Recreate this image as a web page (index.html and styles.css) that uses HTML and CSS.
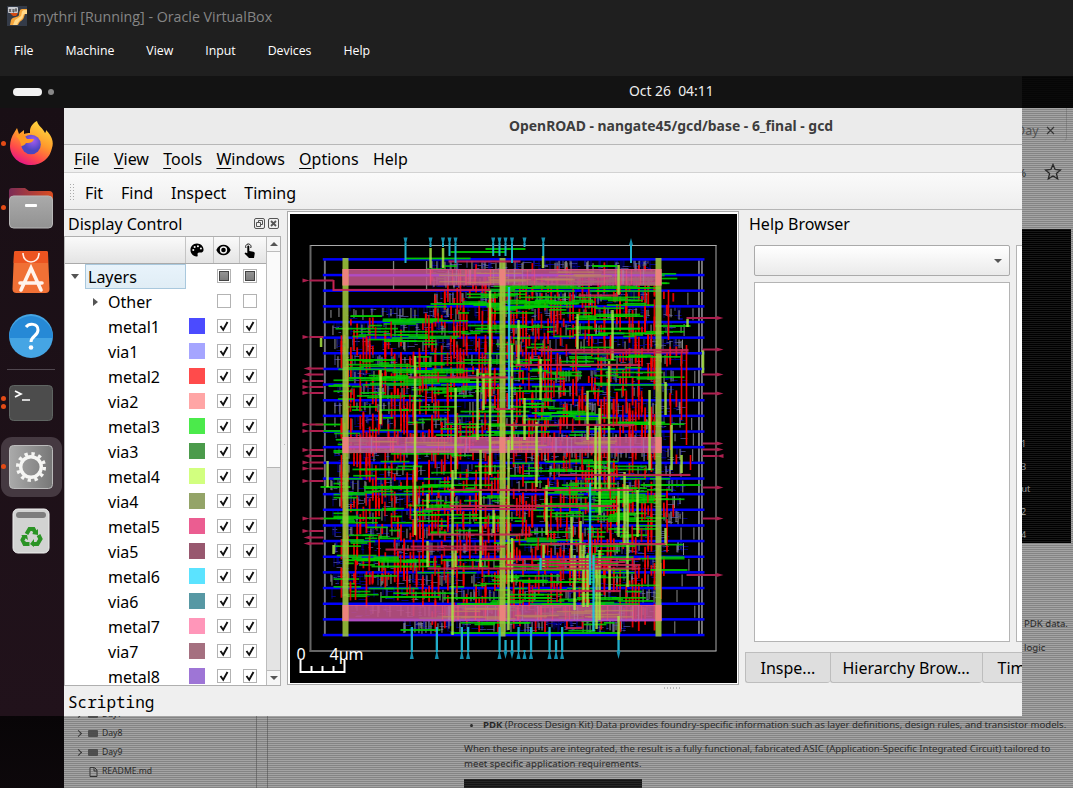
FILE: index.html
```html
<!DOCTYPE html>
<html lang="en">
<head>
<meta charset="utf-8">
<title>mythri [Running] - Oracle VirtualBox</title>
<link rel="stylesheet" href="styles.css">
</head>
<body>
<header class="host">
  <div class="host-title">
    <svg class="vm-icon" width="20" height="20" viewBox="0 0 20 20"><rect width="20" height="20" fill="#343b48"/><path d="M20 3h-5c-2 0-3 3-3 6-1 3-6 1-8 5l-1 5h8c2-5 5-4 6-8l1-3h2z" fill="#f6a63c"/><path d="M20 4h-3c-3 1-2 4-3 6l-6 4-2 5h4c2-6 6-5 6-9l1-2h3z" fill="#ffd98b"/><path d="M3 7h8l-2 3H6z" fill="#d64b13"/><rect x="1" y="1" width="10" height="6" rx="1" fill="#c9cbd0"/><path d="M2 3l2 3M4 3L2 6M6 3v3h1V3M9 2v4M8 4h2" stroke="#333" stroke-width=".8" fill="none"/></svg>
    <span>mythri [Running] - Oracle VirtualBox</span>
  </div>
  <nav class="host-menu"><span>File</span><span>Machine</span><span>View</span><span>Input</span><span>Devices</span><span>Help</span></nav>
</header>
<div class="topbar"><i class="pill"></i><i class="dot"></i><time>Oct 26&nbsp; 04:11</time><i class="topbar-edge"></i></div>
<div class="desktop">
  <aside class="dock">
    <div class="app"><i class="run"></i>
      <svg width="46" height="46" viewBox="0 0 46 46"><defs><linearGradient id="ff" x1=".8" y1="0" x2=".3" y2="1"><stop offset="0" stop-color="#ffe040"/><stop offset=".45" stop-color="#ff9a2c"/><stop offset=".75" stop-color="#ff4a4a"/><stop offset="1" stop-color="#e31587"/></linearGradient><radialGradient id="fp" cx=".6" cy=".3"><stop offset="0" stop-color="#a45cf0"/><stop offset="1" stop-color="#4b46c0"/></radialGradient></defs><path d="M22 10c0-4 3-8 7-10 1 5 6 7 8 12 1-1 1-2 1-3 6 6 8 12 6 18-2 10-10 17-21 17S2 36 2 25c0-5 2-10 4-13l3-5 2 6 5-4v4c2-1 4-1 6-1z" fill="url(#ff)"/><circle cx="23" cy="23.500" r="9.800" fill="url(#fp)"/><path d="M8 15c4-3 9-1 11 3h7c-1 4-5 4-8 4-1 2-3 3-5 3 0-4-2-7-5-10z" fill="#ff9a22"/></svg></div>
    <div class="app"><i class="run"></i>
      <svg width="46" height="46" viewBox="0 0 46 46"><defs><linearGradient id="fo"><stop offset="0" stop-color="#7b2c56"/><stop offset="1" stop-color="#dc4d20"/></linearGradient><linearGradient id="gr" x1="0" y1="0" x2="0" y2="1"><stop offset="0" stop-color="#aaa"/><stop offset="1" stop-color="#929292"/></linearGradient></defs><path d="M1 6q0-3 3-3h13l4 3h20q4 0 4 4v12H1z" fill="url(#fo)"/><rect x="1.500" y="11" width="43" height="32" rx="4" fill="url(#gr)" stroke="#b7b7b7"/><rect x="17" y="19" width="12" height="3" rx="1" fill="#fff"/></svg></div>
    <div class="app">
      <svg width="46" height="46" viewBox="0 0 46 46"><path d="M8 2h30q2 0 2 2l1.500 36q0 4-4 4h-29q-4 0-4-4L6 4q0-2 2-2z" fill="#f07035"/><path d="M8 2h30q2 0 2 2v10H5.600L6 4q0-2 2-2z" fill="#ec5420"/><path d="M15 4c0 12 16 12 16 0" fill="none" stroke="#fff0e8" stroke-width="1.600"/><path d="M13 41l10-22 10 22M12 34h22" fill="none" stroke="#fff4ed" stroke-width="3.600" stroke-linecap="round"/></svg></div>
    <div class="app">
      <svg width="46" height="46" viewBox="0 0 46 46"><circle cx="23" cy="23" r="22" fill="#45a5e4"/><path d="M1 25a22 22 0 0 1 44 0z" fill="#2689d6"/><path d="M18 14c3-4 12-4 12 3 0 6-7 6-7 12" fill="none" stroke="#fff" stroke-width="3"/><circle cx="23" cy="34.500" r="2.300" fill="#fff"/></svg></div>
    <hr>
    <div class="app"><i class="run two"></i>
      <svg width="46" height="46" viewBox="0 0 46 46"><rect x="1.500" y="5.500" width="43" height="35" rx="4" fill="#4c4c4c" stroke="#5f6562"/><path d="M7 11l6 3-6 3M14 20h8" fill="none" stroke="#fff" stroke-width="1.700"/></svg></div>
    <div class="app active"><i class="run"></i>
      <svg width="46" height="46" viewBox="0 0 46 46"><defs><linearGradient id="st"><stop offset="0" stop-color="#aaa"/><stop offset="1" stop-color="#777"/></linearGradient></defs><rect x="1.500" y="1.500" width="43" height="43" rx="4" fill="url(#st)" stroke="#bbb"/><circle cx="23" cy="23" r="10.300" fill="none" stroke="#f5f5f3" stroke-width="3.400"/><circle cx="23" cy="23" r="13.300" fill="none" stroke="#f5f5f3" stroke-width="3.500" stroke-dasharray="3.300 3.664"/></svg></div>
    <div class="app">
      <svg width="46" height="46" viewBox="0 0 46 46"><rect x="5" y="1" width="36" height="44" rx="5" fill="#d2d3d2" stroke="#eee"/><rect x="8" y="4" width="30" height="6" rx="3" fill="#7d7d7d"/><g fill="none" stroke="#2b9425" stroke-width="4"><path d="M18.500 26l3-5h4l2 4M30.500 27l2 4-3 5h-5M21.500 36h-5l-2-4 2-4"/></g><path d="M24 26l6 1 0-6zM26 31v8l-4-3zM13 27l6 0 1 5z" fill="#2b9425"/></svg></div>
  </aside>
  <main class="stage">
    <div class="backdrop">
      <div class="tree-bg"><p class="dir">Day7</p><p class="dir">Day8</p><p class="dir">Day9</p><p class="doc"><svg width="9" height="10" viewBox="0 0 9 10"><path d="M1 .5h4.500L8 3v6.500H1zM5 1v3h3" fill="none" stroke="#333"/></svg>README.md</p></div>
      <div class="article"><ul><li><b>PDK</b> (Process Design Kit) Data provides foundry-specific information such as layer definitions, design rules, and transistor models.</li></ul><p>When these inputs are integrated, the result is a fully functional, fabricated ASIC (Application-Specific Integrated Circuit) tailored to<br>meet specific application requirements.</p><i class="block"></i></div>
      <div class="strip">
        <span class="tab-bg">Day <svg width="9" height="9" viewBox="0 0 9 9"><path d="M1 1l7 7M8 1L1 8" stroke="#333" stroke-width="1.200"/></svg></span>
        <span class="star-bg"><em>%</em><svg width="18" height="18" viewBox="0 0 18 18"><path d="M9 1.500l2.100 5 5.400.5-4.100 3.500 1.300 5.300L9 13l-4.700 2.800 1.300-5.300L1.500 7l5.400-.5z" fill="none" stroke="#222" stroke-width="1.300"/></svg></span>
        <div class="code-bg"><span>1</span><span>3</span><span>out</span><span>2</span><span>4</span></div>
        <span class="frag">PDK data.</span><span class="frag">logic</span>
      </div>
      <div class="scan"></div>
    </div>
    <section class="window">
      <div class="win-title">OpenROAD - nangate45/gcd/base - 6_final - gcd</div>
      <nav class="menubar"><span><u>F</u>ile</span><span><u>V</u>iew</span><span><u>T</u>ools</span><span><u>W</u>indows</span><span><u>O</u>ptions</span><span>Help</span></nav>
      <div class="toolbar"><i class="grip"></i><span>Fit</span><span>Find</span><span>Inspect</span><span>Timing</span></div>
      <div class="work">
        <div class="control">
          <div class="panel-title"><span>Display Control</span>
            <svg width="26" height="12" viewBox="0 0 26 12" fill="none" stroke="#555"><rect x=".5" y=".5" width="10" height="10" rx="1.500"/><path d="M4.500 4V2.500h4v4H7M2.500 4.500h4v4h-4z"/><rect x="14.500" y=".5" width="10" height="10" rx="1.500"/><path d="M17 3l5 5M22 3l-5 5" stroke-width="1.800"/></svg></div>
          <div class="tree">
            <div class="tree-main">
              <div class="tree-head"><i></i>
                <b><svg width="14" height="14" viewBox="0 0 15 14"><path d="M7.500 0C3 0 .5 3.300.5 7s3 7 6.500 7c2 0 1-2 1-3 .3-1 1-1.300 3-1.300 2.500 0 3.500-1 3.500-3C14.500 3 11.500 0 7.500 0z"/><g fill="#f4f4f4"><circle cx="3.500" cy="7" r="1.100"/><circle cx="5" cy="3.700" r="1.100"/><circle cx="8.500" cy="3" r="1.100"/><circle cx="11.700" cy="5.300" r="1.100"/></g></svg></b>
                <b><svg width="15" height="12" viewBox="0 0 15 12"><path d="M.3 6C3-1 12-1 14.700 6 12 13 3 13 .3 6z"/><circle cx="7.500" cy="6" r="3.700" fill="#f4f4f4"/><circle cx="7.500" cy="6" r="2.300"/></svg></b>
                <b><svg width="12" height="15" viewBox="0 0 12 15"><path d="M3.300 3.500q0-1 1-1t1 1V8l4 .8q1.700.5 1.400 2L10 15H5L.5 10.500l1-1 1.800.7z"/><path d="M2 5a2.700 2.700 0 1 1 4.700 0" fill="none" stroke="#111"/></svg></b></div>
              <div class="rows" id="rows"></div>
            </div>
            <div class="scroll"><i class="arr up"></i><i class="track"></i><i class="arr down"></i></div>
          </div>
        </div>
        <i class="split"></i>
        <div class="view"><svg id="chip" width="447" height="469" viewBox="289.5 214 447 469"></svg></div>
        <div class="help">
          <div class="help-title">Help Browser</div>
          <div class="help-grid"><div class="combo"><i class="arr down"></i></div><div class="page"></div><div class="page next"></div></div>
          <div class="tabs"><span>Inspe...</span><span>Hierarchy Brow...</span><span>Timing</span></div>
        </div>
      </div>
      <div class="scripting"><span>Scripting</span><i></i></div>
    </section>
  </main>
</div>
<script src="app.js"></script>
</body>
</html>
```
FILE: styles.css
```css
* { box-sizing: border-box; }
body { margin: 0; width: 1073px; height: 788px; overflow: hidden; background: #000; font-family: "Noto Sans", sans-serif; }
i, em { font-style: normal; display: block; }
p, ul { margin: 0; padding: 0; }
svg { display: block; flex: none; }
.host { height: 76px; background: #1f1f1f; }
.host-title { display: flex; gap: 6px; height: 34px; padding: 6px 0 0 7px; font: 14.25px/21px "Open Sans", sans-serif; color: #858585; }
.host-menu { display: flex; gap: 32px; padding: 7px 0 0 14px; font: 12.3px/19px "Open Sans", sans-serif; color: #fff; }
.topbar { display: flex; align-items: center; height: 32px; background: #131313; padding-left: 13px; font-size: 13.900px; color: #eee; }
.pill { width: 29px; height: 8px; border-radius: 4px; background: #f2f2f2; }
.dot { width: 6px; height: 6px; margin-left: 6px; border-radius: 3px; background: #888; }
.topbar time { margin-left: 575px; width: 393px; line-height: 30px; padding-bottom: 2px; }
.topbar-edge { width: 51px; margin-left: 1px; height: 32px; background: repeating-linear-gradient(#0a0a0a 0 1px, #060606 1px 2px); }
.desktop { display: flex; height: 680px; }
.dock { width: 64px; flex: none; padding-top: 4px; display: flex; flex-direction: column; background: linear-gradient(#190f15, #21121b 608px, #080507 608px, #0d080b); }
.app { display: flex; align-items: center; height: 60px; margin: 2px 2px 2px 1px; padding-left: 7px; position: relative; }
.active { background: #453941; border-radius: 11px; }
.run { position: absolute; left: 0; top: 27px; width: 5px; height: 5px; border-radius: 50%; background: #e34b16; }
.two { top: 23px; box-shadow: 0 8px #e34b16; }
.dock hr { width: 48px; margin: 1px 0 1px 7px; border: 0; border-top: 1px solid #514850; }
.stage { position: relative; flex: 1; overflow: hidden; }
.backdrop { position: absolute; inset: 0; background: #a4a4a4; color: #252525; font-size: 9.610px; }
.scan { position: absolute; inset: 0; background: repeating-linear-gradient(transparent 0 1px, rgba(70,70,70,.34) 1px 2px); }
.tree-bg { position: absolute; left: 0; top: 597px; width: 204px; height: 90px; border-right: 1px solid #777; box-shadow: -10px 0 #a4a4a4 inset, -11px 0 #777 inset; font-size: 8.6px; line-height: 19px; }
.dir { padding-left: 38px; position: relative; }
.dir::before { content: ""; position: absolute; left: 12px; top: 7px; width: 4px; height: 4px; border: solid #333; border-width: 1px 1px 0 0; transform: rotate(45deg); }
.dir::after { content: ""; position: absolute; left: 24px; top: 6px; width: 10px; height: 7px; background: #505050; border-radius: 1px; }
.doc { display: flex; align-items: center; gap: 4px; padding-left: 25px; }
.article { position: absolute; left: 400px; top: 609px; width: 660px; line-height: 15px; white-space: nowrap; }
.article ul { padding-left: 19px; margin-bottom: 9px; }
.block { width: 178px; height: 12px; margin-top: 8px; background: #151515; }
.strip { position: absolute; left: 952px; top: 0; width: 57px; height: 608px; overflow: hidden; }
.tab-bg { display: flex; align-items: center; gap: 7px; padding-top: 10px; height: 34px; font-size: 12.500px; color: #555; border-right: 1px solid #8b8b8b; width: 51px; border-radius: 0 0 5px 0; }
.star-bg { display: flex; align-items: center; gap: 18px; height: 87px; padding: 0 0 27px 1px; font-size: 11px; }
.code-bg { display: flex; flex-direction: column; width: 55px; height: 314px; padding: 204px 0 0 5px; background: #000; color: #aaa; font-size: 9px; line-height: 22.700px; }
.code-bg span { padding-left: 0; }
.code-bg span:nth-child(3) { margin-left: -5px; }
.frag { display: block; padding-left: 8px; line-height: 24px; height: 24px; }
.strip .code-bg { margin-bottom: 69px; }
.window { position: absolute; left: 0; top: 0; width: 958px; height: 608px; overflow: hidden; background: #efefef; color: #000; font-size: 16px; }
.win-title { height: 37px; padding-left: 445px; background: #ebebeb; border-bottom: 1px solid #b7b7b7; font: bold 13.930px/36px "Noto Sans", sans-serif; color: #3d3d3d; white-space: nowrap; }
.menubar { display: flex; height: 28px; padding-left: 10px; gap: 14.300px; line-height: 29px; border-bottom: 1px solid #d2d2d2; }
.menubar u { text-underline-offset: 3px; text-decoration-thickness: 1px; }
.toolbar { display: flex; height: 37px; padding-left: 5px; gap: 17.900px; line-height: 41px; background: linear-gradient(#fafafa, #eee); border-bottom: 1px solid #b5b5b5; }
.grip { width: 5px; height: 17px; margin: 10px -7px 0 0; background: radial-gradient(circle, #aaa .7px, transparent 1px) 0 0 / 3px 3px; }
.work { display: flex; height: 474px; padding-top: 1px; }
.control { width: 217px; }
.panel-title { display: flex; justify-content: space-between; height: 25px; padding: 1px 1px 0 4px; line-height: 25px; }
.panel-title svg { margin-top: 6px; }
.tree { display: flex; height: 450px; border: 1px solid #afafaf; border-left-color: #bbb; background: #fff; }
.tree-main { width: 202px; height: 448px; overflow: hidden; }
.tree-head { display: grid; grid-template-columns: 120px 28px 26px 27px; height: 27px; background: linear-gradient(#fafafa, #e4e4e4); border-bottom: 1px solid #aaa; }
.tree-head b { display: flex; align-items: center; justify-content: center; border-left: 1px solid #c4c4c4; padding-right: 6px; }
.row { display: grid; grid-template-columns: 43px 81px 28px 26px 20px; height: 25px; align-items: center; position: relative; line-height: 27px; }
.row span { height: 25px; }
.row.group { grid-template-columns: 20px 101px 31px 26px 20px; }
.row.group .name { border: 1px solid #a9c8dd; background: linear-gradient(#e8f3fb, #e0edf5); padding-left: 2px; height: 25px; line-height: 24px; }
.exp { justify-self: center; border: 4px solid transparent; border-top: 5px solid #555; border-bottom: 0; }
.exp.side { justify-self: end; margin-right: 10px; border: 4px solid transparent; border-left: 5px solid #555; border-right: 0; }
.swatch { width: 16px; height: 16px; margin-top: -2px; }
.check { width: 14px; height: 14px; margin-top: -2px; border: 1px solid #b3b3b3; background: #fff; }
.check.part { background: linear-gradient(#999, #777); border-color: #b3b3b3; box-shadow: inset 0 0 0 1px #fff, inset 0 0 0 2px #444; }
.scroll { width: 14px; display: flex; flex-direction: column; border-left: 1px solid #bcbcbc; background: #e4e4e4; }
.scroll .arr { height: 14px; background: #f6f6f6; display: grid; place-items: center; }
.arr::before { content: ""; display: block; border: 4px solid transparent; }
.arr.up::before { border-bottom: 4px solid #555; border-top: 0; }
.arr.down::before { border-top: 4px solid #555; border-bottom: 0; }
.track { flex: 1; border: solid #bcbcbc; border-width: 1px 0; background: linear-gradient(#fafafa 215px, #b5b5b5 215px 216px, #e4e4e4 216px); }
.split { width: 6px; background: radial-gradient(circle, #bbb .7px, transparent 1px) 2px 232px / 3px 3px no-repeat; }
.view { width: 452px; height: 474px; padding: 2px 1.5px; border: 1px solid #aaa; background: #fff; flex: none; }
.view svg { background: #000; }
.help { flex: none; width: 283px; overflow: hidden; padding-left: 6px; }
.help-title { height: 34px; padding: 1px 0 0 4px; line-height: 25px; }
.help-grid { display: grid; grid-template-columns: 256px 200px; grid-template-rows: 31px 360px; gap: 6px; padding-left: 9px; }
.combo { display: flex; justify-content: flex-end; align-items: center; padding-right: 7px; border: 1px solid #aaa; border-radius: 2px; background: linear-gradient(#fff, #eaeaea); }
.page { border: 1px solid #b4b4b4; background: #fff; }
.page.next { grid-column: 2; grid-row: 1 / 3; }
.tabs { display: flex; margin-top: 10px; height: 31px; line-height: 30px; white-space: nowrap; }
.tabs span { border: 1px solid #bdbdbd; border-right: 0; border-radius: 0 0 3px 3px; background: #dedede; padding: 0 14.500px; flex: none; }
.tabs span:nth-child(1) { width: 85px; }
.tabs span:nth-child(2) { width: 152px; padding: 0 11.500px; }
.scripting { display: flex; justify-content: space-between; height: 32px; padding-left: 4px; font: 16px/36px "Noto Sans Mono", "DejaVu Sans Mono", monospace; }
.scripting i { width: 18px; height: 2px; margin: 3px 340px 0 0; background: repeating-linear-gradient(90deg, #bbb 0 1px, transparent 1px 3px); }
```
FILE: app.js
```js
const layers = [["metal1","#4b4bff"],["via1","#a5a5ff"],["metal2","#ff4b4b"],["via2","#ffa5a5"],["metal3","#4bea4b"],["via3","#4b9b4b"],["metal4","#d2ff7f"],["via4","#94a468"],["metal5","#eb5d91"],["via5","#98586f"],["metal6","#5be3ff"],["via6","#5798a4"],["metal7","#ff96b9"],["via7","#a57080"],["metal8","#9e75d6"]];
const tick = '<i class="check"><svg width="12" height="12" viewBox="0 0 12 12"><path d="M2.500 6l2.700 3.800L9.500 2" fill="none" stroke="#111" stroke-width="1.900"/></svg></i>';
const part = '<i class="check part"></i>', off = '<i class="check"></i>';
document.getElementById("rows").innerHTML =
  `<div class="row group"><i class="exp"></i><span class="name">Layers</span><i></i>${part}${part}</div>` +
  `<div class="row"><i class="exp side"></i><span>Other</span><i></i>${off}${off}</div>` +
  layers.map(([n, c]) => `<div class="row"><i></i><span>${n}</span><i class="swatch" style="background:${c}"></i>${tick}${tick}</div>`).join("");

let seed = 45;
const rnd = () => (seed = (seed * 16807) % 2147483647) / 2147483647;
const between = (a, b) => a + rnd() * (b - a);
const out = [];
const rect = (x, y, w, h, f, o = 1) => out.push(`<rect x="${x.toFixed(1)}" y="${y.toFixed(1)}" width="${w.toFixed(1)}" height="${h.toFixed(1)}" fill="${f}" opacity="${o}"/>`);
const vert = (x, y1, y2, w, f, o) => rect(x - w / 2, y1, w, y2 - y1, f, o);
const horz = (x1, x2, y, w, f, o) => rect(x1, y - w / 2, x2 - x1, w, f, o);
const pitch = 15.65, top0 = 259.4;
const extent = r => r < 3 ? [430, 650] : r > 21 ? [r > 22 ? 400 : 350, r > 22 ? 625 : 650] : [330, r > 18 ? 655 : 682];

// Standard cell internals and pin columns, row by row.
for (let r = 0; r < 24; r++) {
  const y = top0 + r * pitch, [a, b] = extent(r);
  for (let i = 0; i < 75; i++) {
    const x = Math.floor(between(a, b)), h = between(4, 13);
    vert(x + .5, y + 1, y + h, 1, rnd() < .8 ? "#00008c" : "#5050a0", .9);
    horz(x, x + between(2, 8), Math.floor(y + between(3, 13)) + .5, 1, rnd() < .6 ? "#000098" : "#4a4a94", .85);
  }
  for (let i = 0; i < 34; i++) vert(Math.floor(between(a, b)) + .5, y + between(1, 4), y + between(9, 15), 1.100, "#909096", .9);
  [324.300, 701.500, 698.500].forEach(x => vert(x, y + 1, y + 15, 1.900, "#77777c"));
  if (r > 1) vert(704 - between(8, 30), y + 2, y + 14, 1, "#888");
}
[[393,2,16],[426,2,16],[426,18,30],[393,18,30]].forEach(([x, a, b]) => vert(x, 259 + a, 259 + b, 1.300, "#808080"));
for (let r = 0; r < 25; r++) horz(322.300, 704, top0 + r * pitch, 2.500, "#0000ff");

// Vertical red routing with short runs sharing a track.
for (let i = 0; i < 1180; i++) {
  const x = 341 + Math.floor(rnd() * 108) * 3.130, y = between(262, 612);
  const sparse = (x < 430 && y < 312) || (x < 400 && y > 580) || (x > 660 && (y < 285 || y > 565));
  if (sparse || x > 686 || (x > 655 && rnd() < .6)) continue;
  vert(x, y, Math.min(632, y + between(6, rnd() < .3 ? 38 : 21)), 1.800, "#fa0000", .9);
}
// Horizontal green routing gathered in clusters.
for (let c = 0; c < 290; c++) {
  const cy = between(264, 628);
  const cx = between(cy < 312 || cy > 600 ? 430 : 335, cy > 600 ? 600 : 640);
  const n = 1 + Math.floor(rnd() * 4);
  for (let i = 0; i < n; i++) {
    const x = Math.max(cy < 312 ? 426 : 333, cx + between(-24, 24));
    const limit = cy < 272 || cy > 600 ? 640 : 684;
    const y = Math.round((cy + between(-5, 5)) / 3.13) * 3.13 + (rnd() < .3 ? 1.56 : 0);
    if (x < limit) horz(x, Math.min(limit, x + between(8, rnd() < .32 ? 78 : 36)), y, 1.700, "#00d000", .86);
  }
}
[[405,470,258.500],[450,505,252],[485,525,249],[348,380,378],[345,395,360],[430,500,304],[382,410,321],[345,395,510],[338,380,518],[380,440,597],[450,620,633],[400,440,630],[500,650,288],[655,690,326],[640,700,485],[315,340,424.500],[315,340,431],[320,350,487],[320,350,518.500],[328,350,386],[650,687,570]].forEach(g => horz(g[0], g[1], g[2], 1.800, "#00c800"));
// Red tracks that stay visible over the green layer.
for (let i = 0; i < 170; i++) {
  const x = 350 + Math.floor(rnd() * 97) * 3.130, y = between(312, 585);
  vert(x, y, y + between(7, 20), 1.700, "#f50000", .8);
}
[[668,290,340],[686,345,445],[681,350,420],[690,455,470],[670,400,450],[355,560,600],[341,455,500]].forEach(g => vert(g[0], g[1], g[2], 1.600, "#f00000"));

// Power straps.
[[269,285.500],[437,453],[605,621]].forEach(([a, b]) => {
  vert(501.500, a, b, 319, "#c1548a", .88);
  horz(342, 661, a + (a > 600 ? 15.300 : a > 400 ? 10 : 6.300), 2.200, "#b04cc4");
  for (let i = 0; i < 34; i++) vert(Math.floor(between(a > 400 && a < 600 ? 345 : 430, 645)), a + 1, b - 1, 1.400, rnd() < .6 ? "#fb5275" : "#b184ad", .5);
  for (let i = 0; i < 14; i++) { const x = between(a > 400 && a < 600 ? 350 : 430, 600); horz(x, x + between(18, 50), between(a + 3, b - 1), 1.500, "#bd8060", .75); }
  horz(345, 660, a + .5, 1, "#f2578b", .6);
});
[345, 502, 658].forEach(x => {
  vert(x, 258, 636.500, 6, "#a0c83c", .87);
  [[269,285.500],[437,453],[605,621]].forEach(([a, b]) => vert(x, a, b, 6, "#ee7f80", .95));
});
[[430,248,268],[442.500,248,268],[380,370,424],[414.500,356,535],[489.500,290,475],[455,388,479],[477,369,440],[483,374,410],[452,470,635],[455,550,567],[427,494,510],[427,541,567],[480,450,567],[493,508,533],[508,440,630],[511.500,345,450],[511.500,538,582],[518,320,365],[524,398,440],[540,359,400],[536,422,487],[577,314,350],[612,310,360],[608.500,361,490],[587,391,440],[599,408,515],[595,425,490],[649,390,470],[665,382,415],[671,425,470],[618,265,295],[542.500,256,268],[687,319,327],[702.500,350,373],[546,485,535],[571,517,570],[580,521,570],[574,555,610],[583,545,607],[587,555,607],[618,488,537],[624,472,545],[627,485,587],[637,490,537],[665,528,545],[681,455,473],[599,550,620],[596,564,629],[609,565,590],[543,544,567],[618,616,640],[327,461,487],[320.500,336,347],[333,545,554]].forEach(v => vert(v[0], v[1], v[2], 2.500, "#a8e444", .86));
[[333,490,290],[408,513,377.500],[448,520,261.500],[578,618,295.500],[538,688,350],[568,688,352.500],[515,640,365],[505,634,425],[495,515,409],[448,632,490],[449,618,506],[425,535,509],[427,532,534.500],[385,500,549.500],[410,505,546.500],[480,640,559],[427,640,568.500],[558,690,475],[540,665,544],[528,620,591],[505,640,565],[540,625,562],[565,582,628]].forEach(c => horz(c[0], c[1], c[2], 2.100, "#c92353", .88));
vert(333, 280, 291, 2, "#c92353");
[[508.500,287,409],[589.500,483,585],[593,555,631],[540,558,570]].forEach(c => vert(c[0], c[1], c[2], 2.300, "#1fc4dc", .92));

// Die outline and the pins around it.
vert(310, 245, 652, 2, "#666");
horz(309, 716, 651, 2, "#666");
vert(715.500, 245, 651, 1, "#aaa");
horz(310, 716, 245.500, 1, "#aaa");
const tri = (p, f) => out.push(`<path d="${p}" fill="${f}"/>`);
const red = "#ad1f4f", blue = "#168fae";
[[280.500],[337],[368.500,1],[374.500,1],[381],[387],[393],[424.500],[431],[450],[456,1],[462.500],[468.500],[481],[518.500],[531],[537.500,1],[543.500,1]].forEach(([y, o]) => {
  horz(309, y === 280.500 ? 333 : 323, y, 2, red);
  tri(o ? `M303 ${y}l7-2v4z` : `M302 ${y - 2}v4l7-2z`, red);
});
[318,349.500,374.500,393.500,443.500,449.500,456,487.500,518.500,575].forEach(y => {
  horz(y === 318 || y === 575 ? 686 : 702, 717, y, 2, red);
  tri(y === 456 ? `M716 ${y}l7-2v4z` : `M716 ${y - 2}v4l7-2z`, red);
});
[405,430,442.500,449,455,492.700,499,505,511.500,524,542.800,630.500].forEach(x => {
  const end = x === 430 || x === 442.500 || x === 524 ? 247 : [405,455,511.500,630.500].includes(x) ? 263 : 256;
  vert(x, 243, end, 2, "#20aeca");
  tri(x === 630.500 ? `M${x - 2} 245h4l-2-7z` : `M${x - 2} 237.500h4l-1.500 6.500h-1z`, blue);
});
[411.300,436.300,461.300,467.600,499,505,511.500,518,524,530.500,549,555.500,561.600,618].forEach(x => {
  vert(x, x === 524 ? 650 : [505,511.500,555.500,618].includes(x) ? 640 : 627, 652, 2.300, "#20aeca");
  tri([505,511.500,618].includes(x) ? `M${x - 2} 651h4l-2 8z` : `M${x - 2} 659h4l-1.500-7h-1z`, blue);
});
out.push('<path d="M300 660v12h44v-12M311 666v5M322 666v5M333 666v5" fill="none" stroke="#fff" stroke-width="2"/>');
out.push('<g fill="#fff" font-family="Noto Sans" font-size="16"><text x="296" y="660">0</text><text x="329" y="660">4µm</text></g>');
document.getElementById("chip").innerHTML = out.join("");
```
